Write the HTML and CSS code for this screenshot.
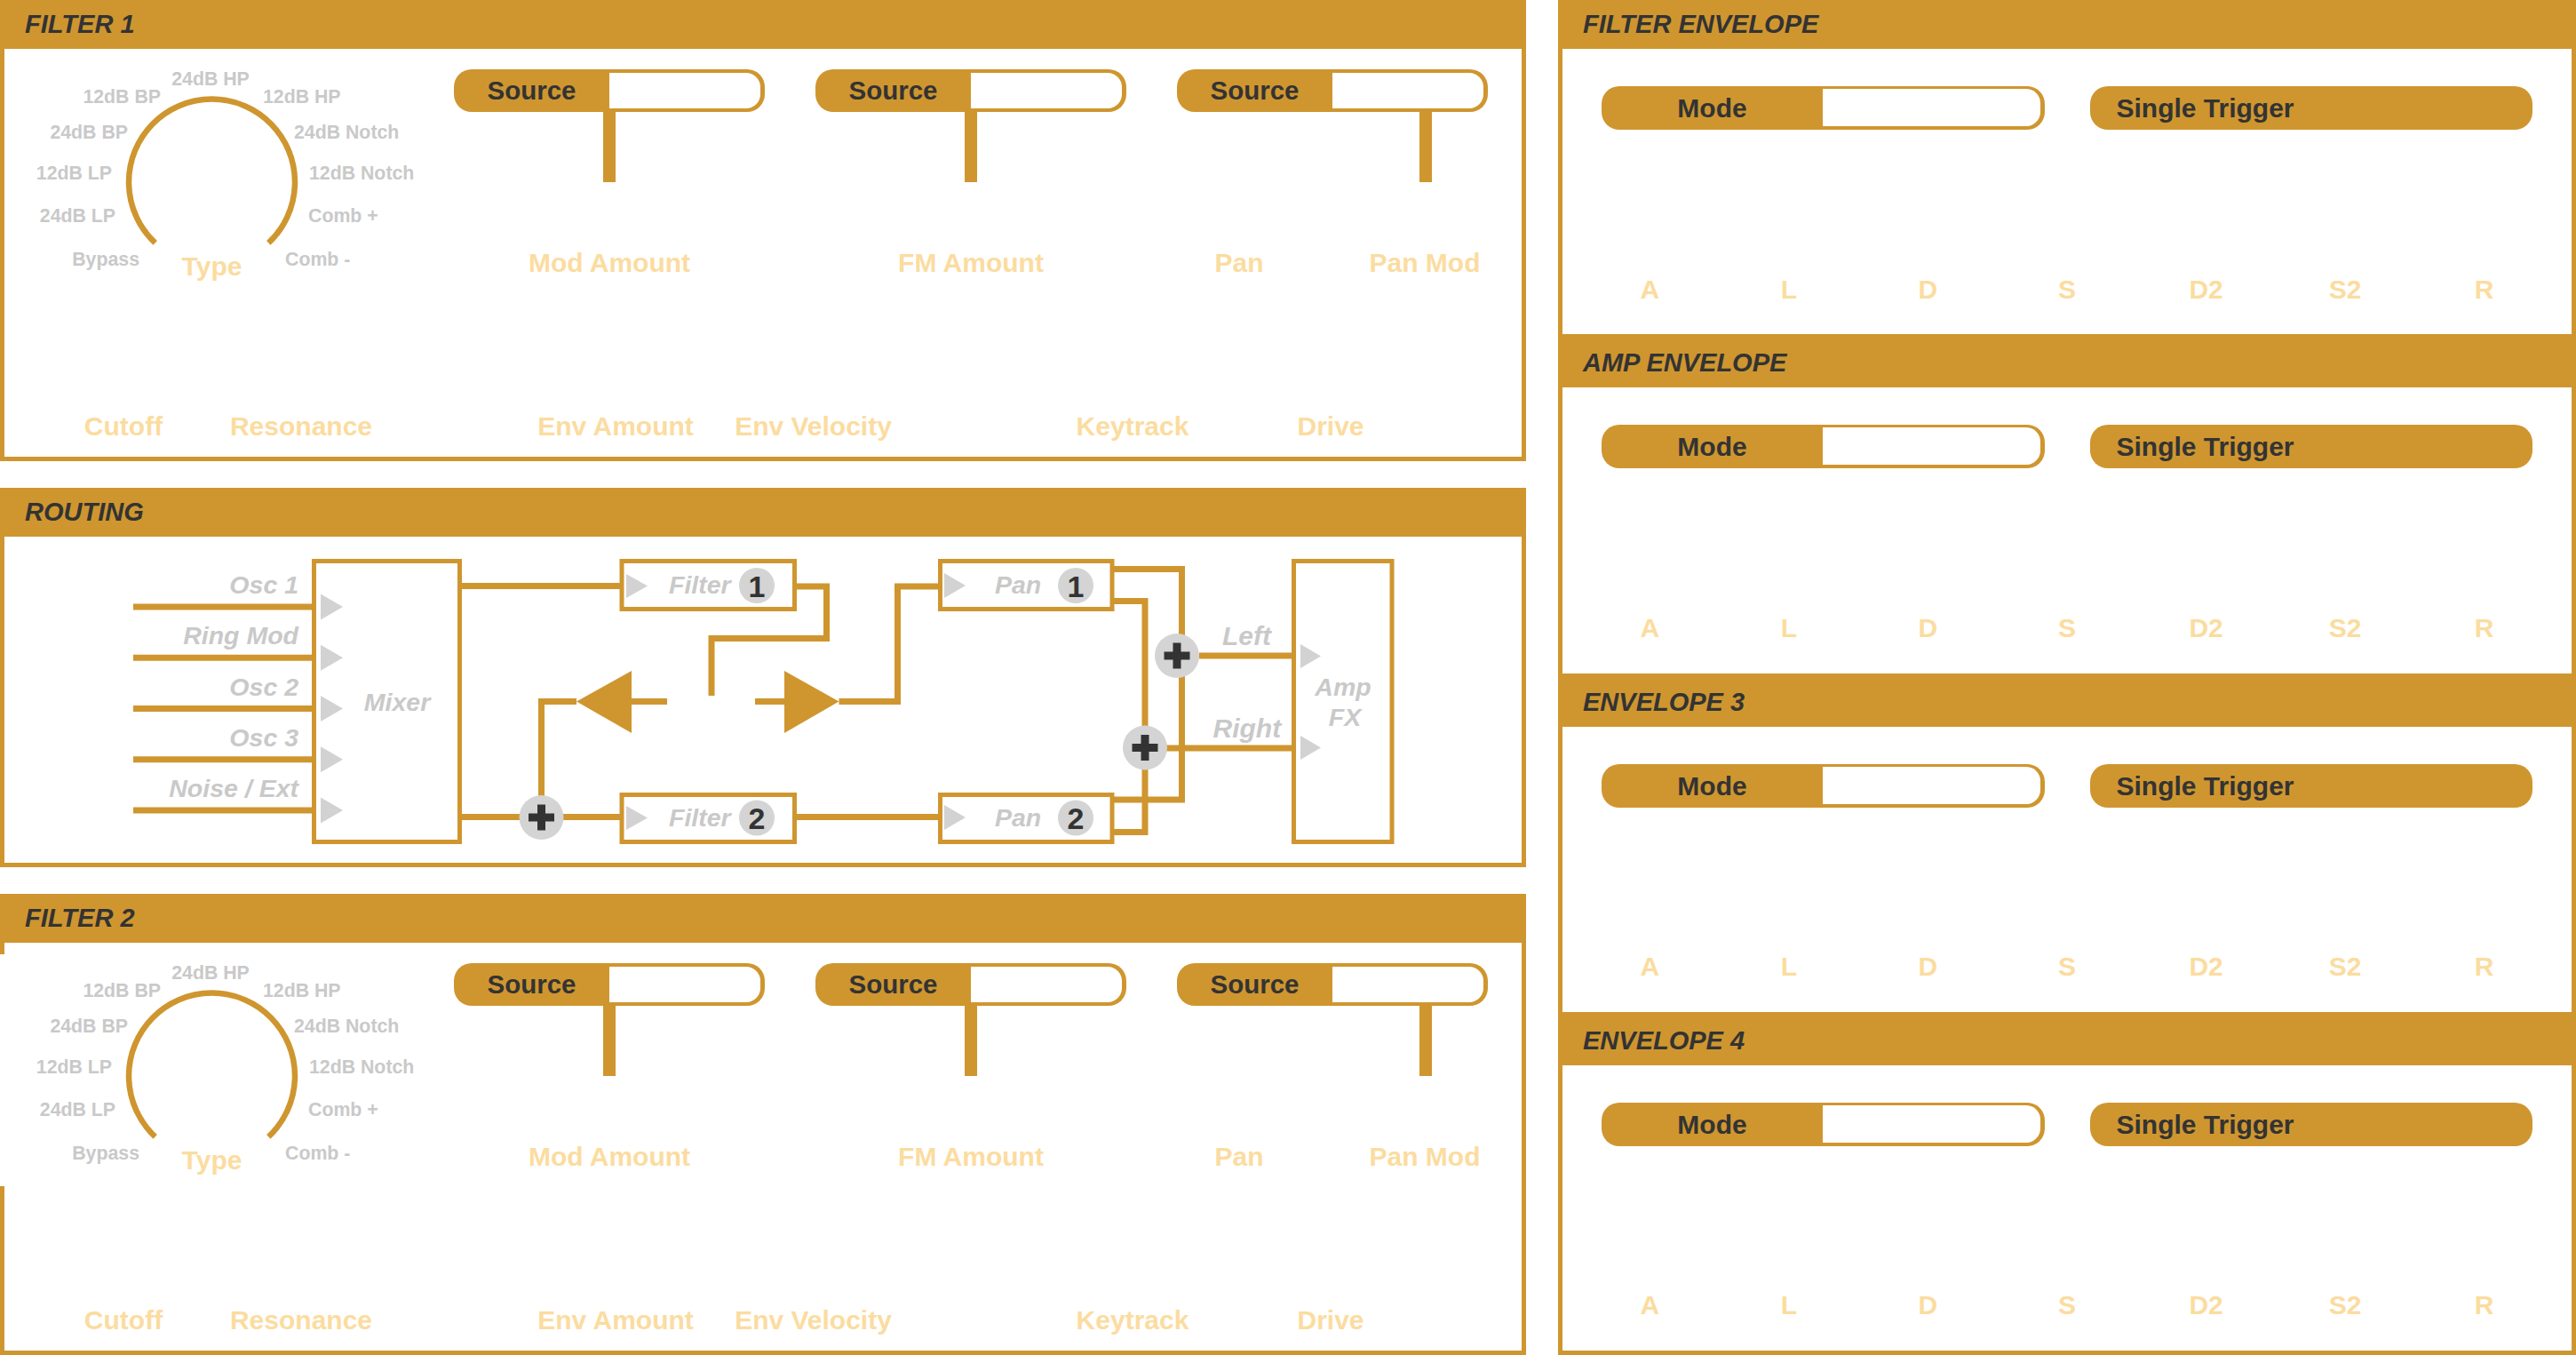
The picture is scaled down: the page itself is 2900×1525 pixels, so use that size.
FILE: index.html
```html
<!DOCTYPE html>
<html lang="en">
<head>
<meta charset="utf-8">
<title>Synth Panel</title>
<link rel="stylesheet" href="styles.css">
</head>
<body>
<main class="synth">
  <div class="col col-left">
    <section class="panel panel-filter">
      <h2 class="panel-head">FILTER 1</h2>
      <div class="panel-body filter-body">
        <div class="filter-top">
          <svg class="type-knob" width="506" height="265" viewBox="0 0 506 265">
            <path class="arc" d="M169.7 218.4 A93.5 93.5 0 1 1 297.3 218.4"/>
            <g class="type-opts">
              <text x="232" y="41" text-anchor="middle">24dB HP</text>
              <text x="176" y="60.5" text-anchor="end">12dB BP</text>
              <text x="291" y="60.5">12dB HP</text>
              <text x="139" y="101" text-anchor="end">24dB BP</text>
              <text x="326" y="101">24dB Notch</text>
              <text x="121" y="146.5" text-anchor="end">12dB LP</text>
              <text x="343" y="146.5">12dB Notch</text>
              <text x="125" y="194.7" text-anchor="end">24dB LP</text>
              <text x="342" y="194.7">Comb +</text>
              <text x="152" y="243.6" text-anchor="end">Bypass</text>
              <text x="316" y="243.6">Comb -</text>
            </g>
            <text class="type-name" x="233.5" y="255" text-anchor="middle">Type</text>
          </svg>
          <div class="slots">
            <div class="slot">
              <div class="pill"><span class="pill-label">Source</span><span class="pill-value"></span></div>
              <div class="stem"></div>
              <div class="slot-labels"><span class="knob-label wide">Mod Amount</span></div>
            </div>
            <div class="slot">
              <div class="pill"><span class="pill-label">Source</span><span class="pill-value"></span></div>
              <div class="stem"></div>
              <div class="slot-labels"><span class="knob-label wide">FM Amount</span></div>
            </div>
            <div class="slot">
              <div class="pill"><span class="pill-label">Source</span><span class="pill-value"></span></div>
              <div class="stem stem-far"></div>
              <div class="slot-labels"><span class="knob-label half">Pan</span><span class="knob-label half pan-mod">Pan Mod</span></div>
            </div>
          </div>
        </div>
        <div class="filter-bottom">
          <span class="knob-label cell m-cutoff">Cutoff</span>
          <span class="knob-label cell">Resonance</span>
          <span class="knob-label cell m-env-amt">Env Amount</span>
          <span class="knob-label cell m-env-vel">Env Velocity</span>
          <span class="knob-label cell m-key">Keytrack</span>
          <span class="knob-label cell m-drive">Drive</span>
        </div>
      </div>
    </section>

    <section class="panel panel-routing">
      <h2 class="panel-head">ROUTING</h2>
      <div class="panel-body routing-body">
        <svg class="routing" width="1708" height="367" viewBox="5 604 1708 367">
          <g class="wire">
            <path d="M150 683H352 M150 740.25H352 M150 797.5H352 M150 854.75H352 M150 912H352"/>
            <path d="M520 659.5H698 M520 919.5H698"/>
            <path d="M897 660H930.5V718.5H801V783"/>
            <path d="M751 789.5H711 M649 789.5H609.5V900"/>
            <path d="M850 789.5H883 M944.5 789.5H1010.5V660H1057"/>
            <path d="M897 919.5H1057"/>
            <path d="M1253 640.5H1330.5V900H1253"/>
            <path d="M1253 676.5H1289V936.5H1253"/>
            <path d="M1350 738H1455 M1313 842H1455"/>
          </g>
          <g class="box">
            <rect x="353.5" y="631.5" width="164" height="316"/>
            <rect x="700" y="631.5" width="194.5" height="54"/>
            <rect x="700" y="894.5" width="194.5" height="53"/>
            <rect x="1058.5" y="631.5" width="193.5" height="54"/>
            <rect x="1058.5" y="894.5" width="193.5" height="53"/>
            <rect x="1456.5" y="631.5" width="110.5" height="316"/>
          </g>
          <g class="amp-tri">
            <polygon points="649,789.5 711,755 711,825"/>
            <polygon points="883,755 944.5,789.5 883,825"/>
          </g>
          <g class="port">
            <polygon points="361,668.5 386,683 361,697.5"/>
            <polygon points="361,725.75 386,740.25 361,754.75"/>
            <polygon points="361,783 386,797.5 361,812"/>
            <polygon points="361,840.25 386,854.75 361,869.25"/>
            <polygon points="361,897.5 386,912 361,926.5"/>
            <polygon points="705,646 729,659.5 705,673"/>
            <polygon points="705,907 729,920.5 705,934"/>
            <polygon points="1063,645 1087,659 1063,673"/>
            <polygon points="1063,906 1087,920 1063,934"/>
            <polygon points="1464,725 1487,738.5 1464,752"/>
            <polygon points="1464,828 1487,841.5 1464,855"/>
          </g>
          <g class="sum">
            <circle cx="609.5" cy="920" r="25"/>
            <circle cx="1325" cy="738" r="25"/>
            <circle cx="1289" cy="841.5" r="25"/>
          </g>
          <g class="plus">
            <rect x="605" y="905.5" width="9" height="29"/>
            <rect x="595" y="915.5" width="29" height="9"/>
            <rect x="1320.5" y="723.5" width="9" height="29"/>
            <rect x="1310.5" y="733.5" width="29" height="9"/>
            <rect x="1284.5" y="827" width="9" height="29"/>
            <rect x="1274.5" y="837" width="29" height="9"/>
          </g>
          <g class="badge">
            <circle cx="852" cy="659" r="20"/>
            <circle cx="852" cy="920.5" r="20"/>
            <circle cx="1211" cy="659" r="20"/>
            <circle cx="1211" cy="920.5" r="20"/>
          </g>
          <g class="badge-num">
            <text x="852" y="671.5" text-anchor="middle">1</text>
            <text x="852" y="933" text-anchor="middle">2</text>
            <text x="1211" y="671.5" text-anchor="middle">1</text>
            <text x="1211" y="933" text-anchor="middle">2</text>
          </g>
          <g class="rlabel">
            <text x="336" y="668" text-anchor="end">Osc 1</text>
            <text x="336" y="725.25" text-anchor="end">Ring Mod</text>
            <text x="336" y="782.5" text-anchor="end">Osc 2</text>
            <text x="336" y="839.75" text-anchor="end">Osc 3</text>
            <text x="336" y="897" text-anchor="end">Noise / Ext</text>
            <text x="447" y="800" text-anchor="middle">Mixer</text>
            <text x="753" y="668">Filter</text>
            <text x="753" y="929.5">Filter</text>
            <text x="1120" y="668">Pan</text>
            <text x="1120" y="929.5">Pan</text>
            <text x="1512" y="783" text-anchor="middle">Amp</text>
            <text x="1514" y="817" text-anchor="middle">FX</text>
          </g>
          <g class="rlabel rlabel-lg">
            <text x="1376" y="726">Left</text>
            <text x="1365.5" y="830">Right</text>
          </g>
        </svg>
      </div>
    </section>

    <section class="panel panel-filter">
      <h2 class="panel-head">FILTER 2</h2>
      <div class="panel-body filter-body">
        <div class="border-gap"></div>
        <div class="filter-top">
          <svg class="type-knob" width="506" height="265" viewBox="0 0 506 265">
            <path class="arc" d="M169.7 218.4 A93.5 93.5 0 1 1 297.3 218.4"/>
            <g class="type-opts">
              <text x="232" y="41" text-anchor="middle">24dB HP</text>
              <text x="176" y="60.5" text-anchor="end">12dB BP</text>
              <text x="291" y="60.5">12dB HP</text>
              <text x="139" y="101" text-anchor="end">24dB BP</text>
              <text x="326" y="101">24dB Notch</text>
              <text x="121" y="146.5" text-anchor="end">12dB LP</text>
              <text x="343" y="146.5">12dB Notch</text>
              <text x="125" y="194.7" text-anchor="end">24dB LP</text>
              <text x="342" y="194.7">Comb +</text>
              <text x="152" y="243.6" text-anchor="end">Bypass</text>
              <text x="316" y="243.6">Comb -</text>
            </g>
            <text class="type-name" x="233.5" y="255" text-anchor="middle">Type</text>
          </svg>
          <div class="slots">
            <div class="slot">
              <div class="pill"><span class="pill-label">Source</span><span class="pill-value"></span></div>
              <div class="stem"></div>
              <div class="slot-labels"><span class="knob-label wide">Mod Amount</span></div>
            </div>
            <div class="slot">
              <div class="pill"><span class="pill-label">Source</span><span class="pill-value"></span></div>
              <div class="stem"></div>
              <div class="slot-labels"><span class="knob-label wide">FM Amount</span></div>
            </div>
            <div class="slot">
              <div class="pill"><span class="pill-label">Source</span><span class="pill-value"></span></div>
              <div class="stem stem-far"></div>
              <div class="slot-labels"><span class="knob-label half">Pan</span><span class="knob-label half pan-mod">Pan Mod</span></div>
            </div>
          </div>
        </div>
        <div class="filter-bottom">
          <span class="knob-label cell m-cutoff">Cutoff</span>
          <span class="knob-label cell">Resonance</span>
          <span class="knob-label cell m-env-amt">Env Amount</span>
          <span class="knob-label cell m-env-vel">Env Velocity</span>
          <span class="knob-label cell m-key">Keytrack</span>
          <span class="knob-label cell m-drive">Drive</span>
        </div>
      </div>
    </section>
  </div>

  <div class="col col-right">
    <section class="panel env">
      <h2 class="panel-head">FILTER ENVELOPE</h2>
      <div class="panel-body env-body">
        <div class="env-pills">
          <div class="mode-pill"><span class="mode-label">Mode</span><span class="mode-value"></span></div>
          <div class="trigger-pill">Single Trigger</div>
        </div>
        <div class="env-labels"><span>A</span><span>L</span><span>D</span><span>S</span><span>D2</span><span>S2</span><span>R</span></div>
      </div>
    </section>
    <section class="panel env">
      <h2 class="panel-head">AMP ENVELOPE</h2>
      <div class="panel-body env-body">
        <div class="env-pills">
          <div class="mode-pill"><span class="mode-label">Mode</span><span class="mode-value"></span></div>
          <div class="trigger-pill">Single Trigger</div>
        </div>
        <div class="env-labels"><span>A</span><span>L</span><span>D</span><span>S</span><span>D2</span><span>S2</span><span>R</span></div>
      </div>
    </section>
    <section class="panel env">
      <h2 class="panel-head">ENVELOPE 3</h2>
      <div class="panel-body env-body">
        <div class="env-pills">
          <div class="mode-pill"><span class="mode-label">Mode</span><span class="mode-value"></span></div>
          <div class="trigger-pill">Single Trigger</div>
        </div>
        <div class="env-labels"><span>A</span><span>L</span><span>D</span><span>S</span><span>D2</span><span>S2</span><span>R</span></div>
      </div>
    </section>
    <section class="panel env">
      <h2 class="panel-head">ENVELOPE 4</h2>
      <div class="panel-body env-body">
        <div class="env-pills">
          <div class="mode-pill"><span class="mode-label">Mode</span><span class="mode-value"></span></div>
          <div class="trigger-pill">Single Trigger</div>
        </div>
        <div class="env-labels"><span>A</span><span>L</span><span>D</span><span>S</span><span>D2</span><span>S2</span><span>R</span></div>
      </div>
    </section>
  </div>
</main>
</body>
</html>
```
FILE: styles.css
```css
:root {
  --gold: #cf962f;
  --ink: #333333;
  --peach: #fbdca0;
  --grey: #c9c9c9;
  --port: #d2d2d2;
}

* { box-sizing: border-box; }

html, body {
  margin: 0;
  padding: 0;
  background: #ffffff;
}

body {
  font-family: "Liberation Sans", Arial, sans-serif;
  color: var(--ink);
}

.synth {
  display: flex;
  gap: 36px;
  width: 2900px;
  height: 1525px;
  overflow: hidden;
}

.col {
  display: flex;
  flex-direction: column;
  flex: none;
}

.col-left {
  width: 1718px;
  gap: 30px;
}

.col-right {
  width: 1146px;
}

/* ---------- panels ---------- */
.panel {
  display: flex;
  flex-direction: column;
  border: 5px solid var(--gold);
  border-top: 0;
  background: #fff;
  flex: none;
}

.panel-head {
  margin: 0 -5px;
  height: 55px;
  padding-left: 28px;
  background: var(--gold);
  font-size: 29px;
  font-weight: bold;
  font-style: italic;
  line-height: 55px;
  color: var(--ink);
  white-space: nowrap;
}

.panel-body {
  flex: 1;
  position: relative;
}

.panel-filter { height: 519px; }
.panel-routing { height: 427px; }

/* ---------- filter ---------- */
.filter-body {
  display: flex;
  flex-direction: column;
}

.border-gap {
  position: absolute;
  left: -5px;
  top: 13px;
  width: 5px;
  height: 261px;
  background: #fff;
}

.filter-top {
  display: flex;
  align-items: flex-start;
}

.type-knob {
  display: block;
  flex: none;
}

.type-knob .arc {
  fill: none;
  stroke: var(--gold);
  stroke-width: 6.5;
}

.type-opts text {
  font-family: "Liberation Sans", Arial, sans-serif;
  font-weight: bold;
  font-size: 21.3px;
  fill: var(--grey);
}

.type-name {
  font-family: "Liberation Sans", Arial, sans-serif;
  font-weight: bold;
  font-size: 30px;
  fill: var(--peach);
}

.slots {
  display: flex;
  gap: 57px;
  margin-top: 22.5px;
}

.slot {
  width: 350px;
  display: flex;
  flex-direction: column;
}

.pill {
  display: flex;
  height: 48px;
  border-radius: 20px;
  background: var(--gold);
  overflow: hidden;
}

.pill-label {
  width: 175px;
  flex: none;
  text-align: center;
  font-size: 29.5px;
  font-weight: bold;
  line-height: 48px;
  color: var(--ink);
}

.pill-value {
  flex: 1;
  margin: 4px 5px 4px 0;
  background: #fff;
  border-radius: 0 16px 16px 0;
}

.stem {
  width: 14px;
  height: 79px;
  margin-left: 168px;
  background: var(--gold);
}

.stem-far { margin-left: 272.5px; }

.slot-labels {
  display: flex;
  margin-top: 76px;
}

.knob-label {
  display: block;
  flex: none;
  font-size: 30px;
  font-weight: bold;
  line-height: 30px;
  color: var(--peach);
  text-align: center;
  white-space: nowrap;
}

.knob-label.wide { width: 350px; }
.knob-label.half { width: 140px; }
.knob-label.pan-mod { margin-left: 69px; }

.filter-bottom {
  display: flex;
  margin-top: auto;
  margin-bottom: 19.4px;
}

.knob-label.cell { width: 200px; }
.m-cutoff { margin-left: 34px; }
.m-env-amt { margin-left: 154px; }
.m-env-vel { margin-left: 22.5px; }
.m-key { margin-left: 159.5px; }
.m-drive { margin-left: 23px; }

/* ---------- routing ---------- */
.routing { display: block; }

.routing .wire path {
  fill: none;
  stroke: var(--gold);
  stroke-width: 7;
  stroke-linejoin: miter;
  stroke-linecap: butt;
}

.routing .box rect {
  fill: none;
  stroke: var(--gold);
  stroke-width: 5;
}

.routing .amp-tri polygon { fill: var(--gold); }
.routing .port polygon { fill: var(--port); }
.routing .sum circle { fill: #d4d4d4; }
.routing .plus rect { fill: var(--ink); }
.routing .badge circle { fill: #d4d4d4; }

.routing .badge-num text {
  font-family: "Liberation Sans", Arial, sans-serif;
  font-weight: bold;
  font-size: 34px;
  fill: var(--ink);
}

.routing .rlabel text {
  font-family: "Liberation Sans", Arial, sans-serif;
  font-weight: bold;
  font-style: italic;
  font-size: 28.5px;
  fill: var(--grey);
}

.routing .rlabel-lg text { font-size: 30px; }

/* ---------- envelopes ---------- */
.env {
  flex: 1 1 0;
  min-height: 0;
}

.env-body {
  display: flex;
  flex-direction: column;
}

.env-pills {
  display: flex;
  gap: 51px;
  padding: 0 44px;
  margin-top: 42px;
}

.mode-pill,
.trigger-pill {
  flex: 0 0 498.5px;
  height: 49px;
  border-radius: 20px;
  background: var(--gold);
  font-size: 30px;
  font-weight: bold;
  line-height: 49px;
  color: var(--ink);
  white-space: nowrap;
}

.mode-pill {
  display: flex;
  overflow: hidden;
}

.mode-label {
  width: 249px;
  flex: none;
  text-align: center;
}

.mode-value {
  flex: 1;
  margin: 3px 5px 4px 0;
  background: #fff;
  border-radius: 0 16px 16px 0;
}

.trigger-pill { padding-left: 30px; }

.env-labels {
  display: grid;
  grid-template-columns: repeat(7, 1fr);
  padding: 0 20px;
  margin-top: 164.6px;
  font-size: 30px;
  font-weight: bold;
  line-height: 30px;
  color: var(--peach);
  text-align: center;
}
```
